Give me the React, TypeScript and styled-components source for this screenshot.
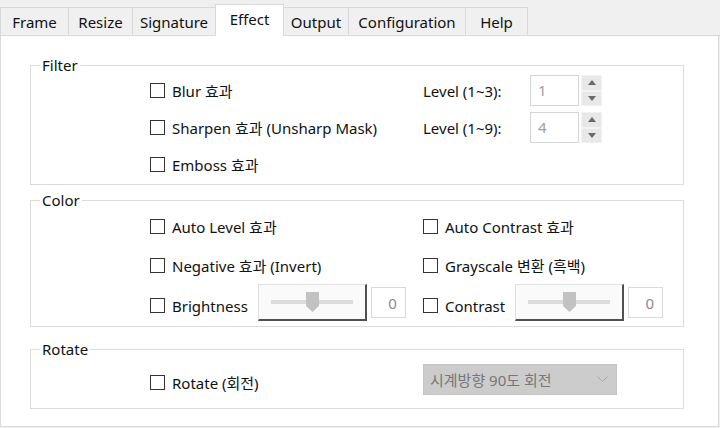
import styled, { createGlobalStyle } from "styled-components";

const GlobalStyle = createGlobalStyle`
  html, body {
    margin: 0;
    padding: 0;
    background: #f0f0f0;
  }
  body {
    font-family: "Noto Sans", "Noto Sans CJK KR", sans-serif;
    font-size: 15px;
    color: #111;
  }
`;

const Window = styled.div`
  width: 720px;
  height: 428px;
  background: #f0f0f0;
  overflow: hidden;
`;

const TabStrip = styled.div`
  display: flex;
  align-items: flex-end;
  height: 35px;
  border-bottom: 1px solid #d9d9d9;
`;

const Tab = styled.div<{ $active?: boolean; $w: number }>`
  box-sizing: border-box;
  display: flex;
  align-items: center;
  justify-content: center;
  width: ${(p) => p.$w}px;
  height: ${(p) => (p.$active ? 32 : 28)}px;
  margin: 0 -1px ${(p) => (p.$active ? -1 : 0)}px 0;
  padding-bottom: ${(p) => (p.$active ? 3 : 0)}px;
  border: 1px solid #d9d9d9;
  border-bottom: none;
  background: ${(p) => (p.$active ? "#fff" : "#f0f0f0")};
  position: relative;
  z-index: ${(p) => (p.$active ? 1 : 0)};
  line-height: 20px;
  white-space: nowrap;
`;

const Panel = styled.div`
  box-sizing: border-box;
  width: 719px;
  height: 391px;
  border: 1px solid #d9d9d9;
  border-top: none;
  background: #fff;
  padding-top: 19px;
`;

const Group = styled.fieldset<{ $top: number }>`
  margin: ${(p) => p.$top}px 34px 0 29px;
  padding: 0;
  border: 1px solid #dcdcdc;
  min-width: 0;
`;

const Legend = styled.legend`
  margin-left: 9px;
  padding: 0 2px;
  line-height: 20px;
`;

const GroupBody = styled.div<{ $pt: number; $pb: number }>`
  display: flex;
  flex-direction: column;
  padding: ${(p) => p.$pt}px 0 ${(p) => p.$pb}px 119px;
`;

const Row = styled.div<{ $h?: number; $mt?: number }>`
  display: grid;
  grid-template-columns: 273px 1fr;
  align-items: center;
  height: ${(p) => p.$h ?? 31}px;
  margin-top: ${(p) => p.$mt ?? 0}px;
`;

const Cell = styled.div`
  display: flex;
  align-items: center;
  height: 100%;
`;

const Check = styled.label<{ $dy?: number }>`
  display: inline-flex;
  align-items: center;
  gap: 7px;
  margin-top: ${(p) => (p.$dy ?? 0) * 2}px;
  line-height: 20px;
  white-space: nowrap;
`;

const Box = styled.span`
  box-sizing: border-box;
  flex: none;
  width: 15px;
  height: 15px;
  border: 1px solid #333;
  background: #fff;
`;

const LevelLabel = styled.span`
  width: 107px;
  line-height: 20px;
  white-space: nowrap;
`;

const Spinner = styled.div`
  display: flex;
  gap: 2px;
  height: 31px;
`;

const SpinInput = styled.div`
  box-sizing: border-box;
  width: 49px;
  padding: 4px 7px;
  border: 1px solid #d5d5d5;
  color: #a0a0a0;
  line-height: 20px;
`;

const SpinButtons = styled.div`
  display: flex;
  flex-direction: column;
  width: 21px;
`;

const SpinButton = styled.div`
  flex: 1;
  display: flex;
  align-items: center;
  justify-content: center;
  background: #e8e8e8;
  border: 1px solid #f3f3f3;
`;

const SliderBox = styled.div`
  box-sizing: border-box;
  display: flex;
  align-items: center;
  width: 109px;
  height: 37px;
  margin-left: 10px;
  padding: 0 12px;
  border: 1px solid #e0e0e0;
  border-right: 2px solid #505050;
  border-bottom: 2px solid #505050;
  background: #fafafa;
`;

const Track = styled.div`
  position: relative;
  flex: 1;
  height: 4px;
  background: #dcdcdc;
`;

const Thumb = styled.svg`
  position: absolute;
  left: 35px;
  top: -8px;
`;

const ValueBox = styled.div`
  box-sizing: border-box;
  display: flex;
  align-items: center;
  justify-content: flex-end;
  width: 35px;
  height: 31px;
  margin-left: 4px;
  padding-right: 8px;
  border: 1px solid #d9d9d9;
  color: #8a8a8a;
`;

const Combo = styled.div`
  box-sizing: border-box;
  display: flex;
  align-items: center;
  justify-content: space-between;
  width: 194px;
  height: 31px;
  padding: 0 8px 0 6px;
  border: 1px solid #c4c4c4;
  background: #cccccc;
  color: #777;
  line-height: 20px;
  white-space: nowrap;
`;

const CheckItem = ({ label, dy }: { label: string; dy?: number }) => (
  <Check $dy={dy}>
    <Box />
    {label}
  </Check>
);

const Arrow = ({ up }: { up?: boolean }) => (
  <svg width="8" height="5" viewBox="0 0 8 5">
    <polygon points={up ? "0,5 8,5 4,0" : "0,0 8,0 4,5"} fill="#6a6a6a" />
  </svg>
);

const NumberSpin = ({ value }: { value: string }) => (
  <Spinner>
    <SpinInput>{value}</SpinInput>
    <SpinButtons>
      <SpinButton>
        <Arrow up />
      </SpinButton>
      <SpinButton>
        <Arrow />
      </SpinButton>
    </SpinButtons>
  </Spinner>
);

const Slider = () => (
  <>
    <SliderBox>
      <Track>
        <Thumb width="13" height="20" viewBox="0 0 13 20">
          <polygon points="0,0 13,0 13,14 6.5,20 0,14" fill="#c2c2c2" />
        </Thumb>
      </Track>
    </SliderBox>
    <ValueBox>0</ValueBox>
  </>
);

const tabs = [
  { label: "Frame", w: 69 },
  { label: "Resize", w: 65 },
  { label: "Signature", w: 84 },
  { label: "Effect", w: 69 },
  { label: "Output", w: 66 },
  { label: "Configuration", w: 118 },
  { label: "Help", w: 63 },
];

export default function App() {
  return (
    <Window>
      <GlobalStyle />
      <TabStrip>
        {tabs.map((t) => (
          <Tab key={t.label} $w={t.w} $active={t.label === "Effect"}>
            {t.label}
          </Tab>
        ))}
      </TabStrip>
      <Panel>
        <Group $top={0}>
          <Legend>Filter</Legend>
          <GroupBody $pt={0} $pb={4}>
            <Row>
              <Cell>
                <CheckItem label="Blur 효과" />
              </Cell>
              <Cell>
                <LevelLabel>Level (1~3):</LevelLabel>
                <NumberSpin value="1" />
              </Cell>
            </Row>
            <Row $mt={6}>
              <Cell>
                <CheckItem label="Sharpen 효과 (Unsharp Mask)" />
              </Cell>
              <Cell>
                <LevelLabel>Level (1~9):</LevelLabel>
                <NumberSpin value="4" />
              </Cell>
            </Row>
            <Row $mt={6}>
              <Cell>
                <CheckItem label="Emboss 효과" />
              </Cell>
            </Row>
          </GroupBody>
        </Group>

        <Group $top={5}>
          <Legend>Color</Legend>
          <GroupBody $pt={1} $pb={5}>
            <Row>
              <Cell>
                <CheckItem label="Auto Level 효과" />
              </Cell>
              <Cell>
                <CheckItem label="Auto Contrast 효과" />
              </Cell>
            </Row>
            <Row $mt={8}>
              <Cell>
                <CheckItem label="Negative 효과 (Invert)" />
              </Cell>
              <Cell>
                <CheckItem label="Grayscale 변환 (흑백)" />
              </Cell>
            </Row>
            <Row $h={37} $mt={3}>
              <Cell>
                <CheckItem label="Brightness" dy={3} />
                <Slider />
              </Cell>
              <Cell>
                <CheckItem label="Contrast" dy={3} />
                <Slider />
              </Cell>
            </Row>
          </GroupBody>
        </Group>

        <Group $top={12}>
          <Legend>Rotate</Legend>
          <GroupBody $pt={5} $pb={13}>
            <Row>
              <Cell>
                <CheckItem label="Rotate (회전)" dy={3} />
              </Cell>
              <Cell>
                <Combo>
                  시계방향 90도 회전
                  <svg width="11" height="7" viewBox="0 0 11 7">
                    <polyline points="0.5,0.5 5.5,5.5 10.5,0.5" fill="none" stroke="#a8a8a8" strokeWidth="1" />
                  </svg>
                </Combo>
              </Cell>
            </Row>
          </GroupBody>
        </Group>
      </Panel>
    </Window>
  );
}
